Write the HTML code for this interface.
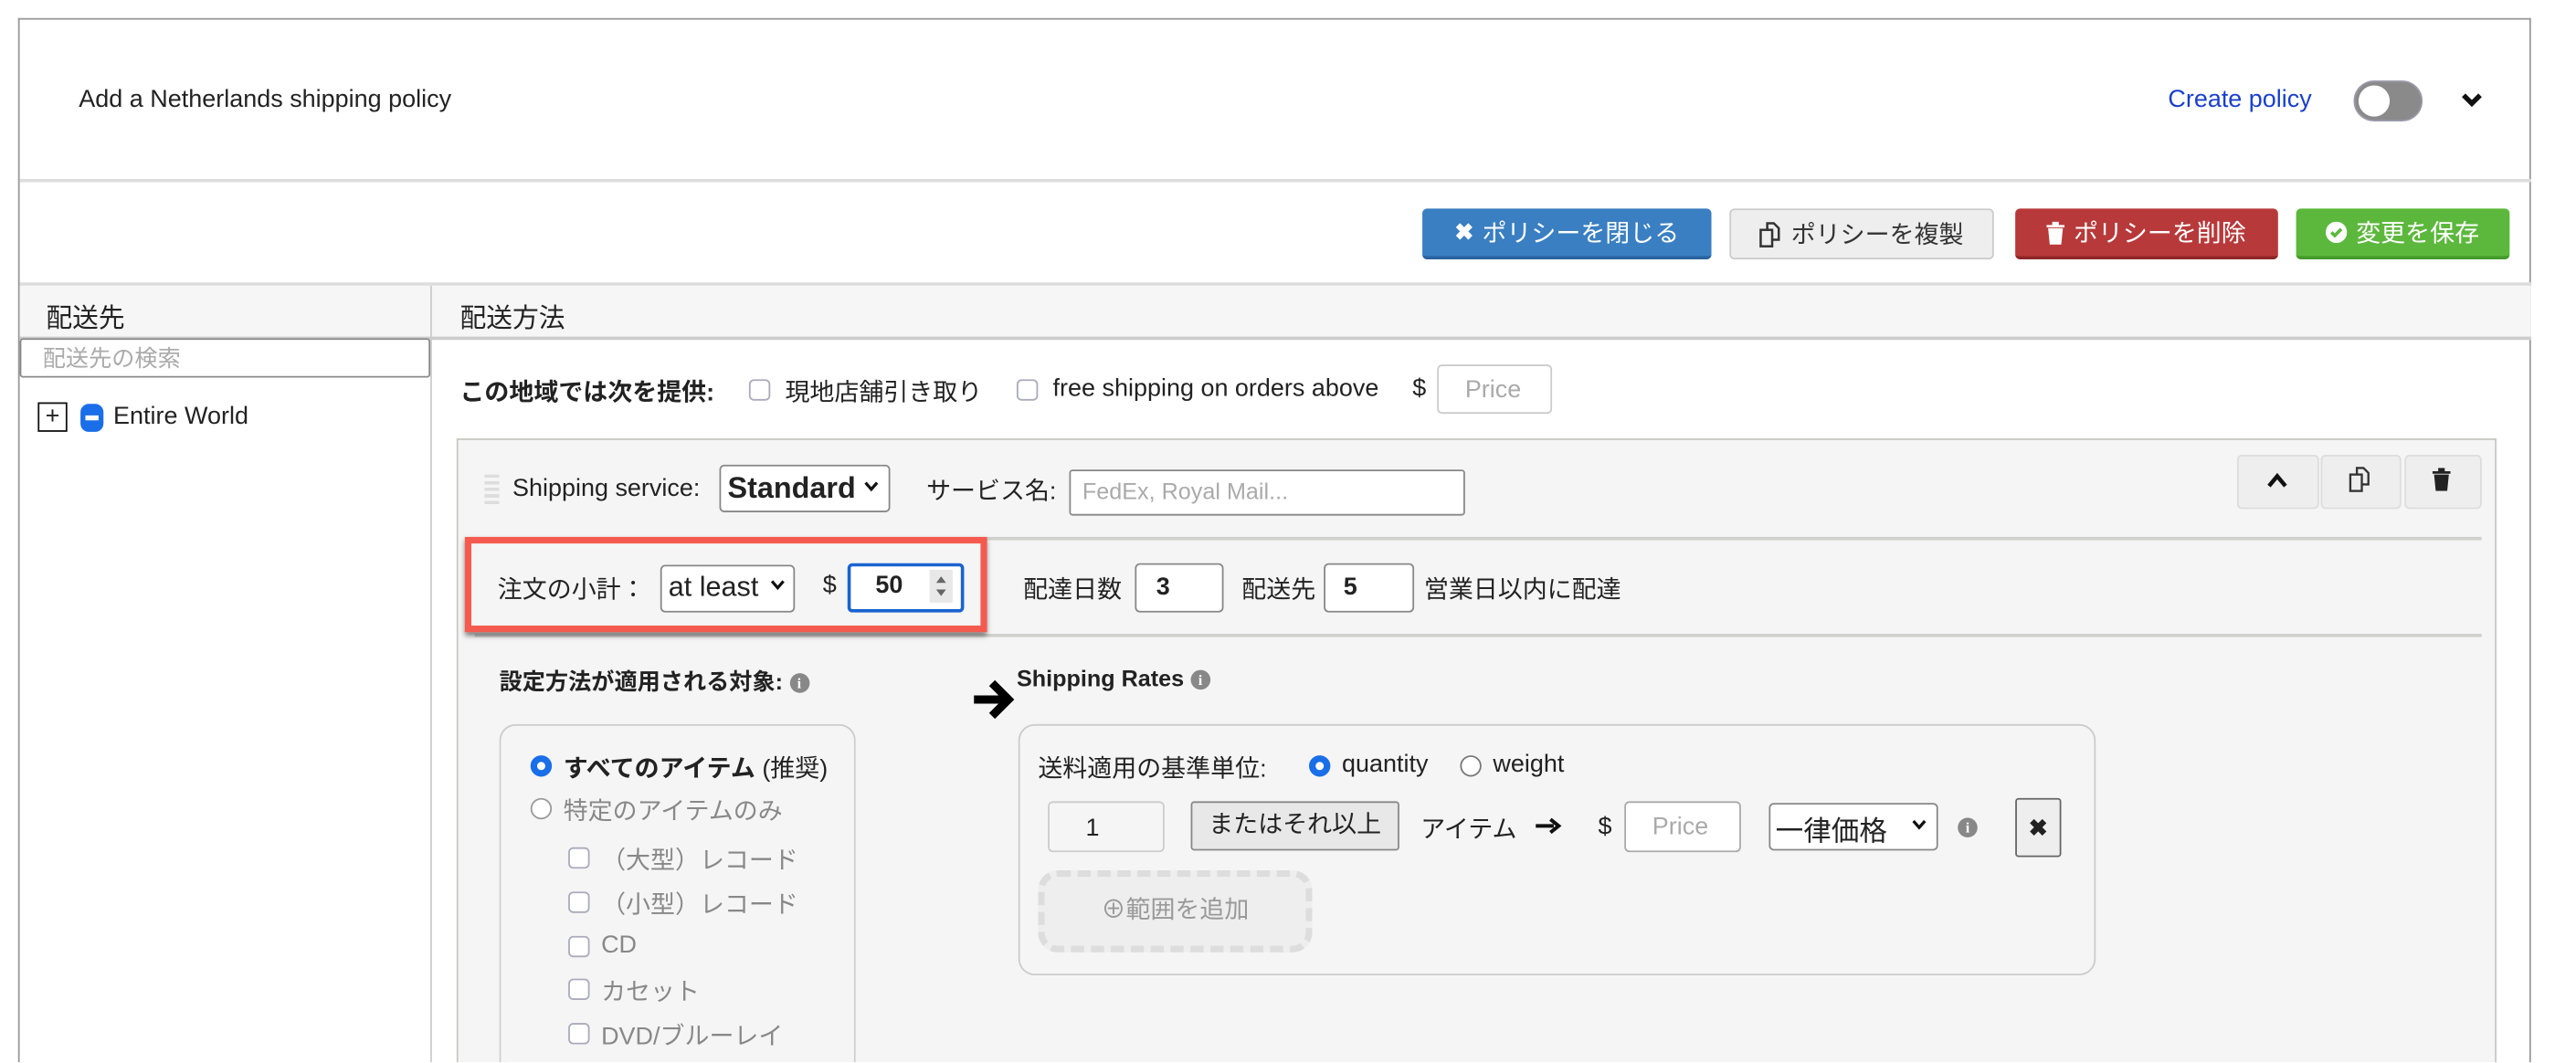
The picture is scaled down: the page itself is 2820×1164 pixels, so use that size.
<!DOCTYPE html>
<html><head><meta charset="utf-8"><style>
html,body{margin:0;padding:0;background:#fff;width:2820px;height:1164px;overflow:hidden}
#w{position:absolute;left:0;top:0;width:1568px;height:647px;overflow:hidden;transform:scale(1.798);transform-origin:0 0;font-family:"Liberation Sans","Noto Sans CJK JP",sans-serif;color:#222;font-size:15px}
.a{position:absolute;white-space:nowrap}
.box{position:absolute;box-sizing:border-box;background:#fff;border:1px solid #888;border-radius:3px}
.btn{position:absolute;box-sizing:border-box;border-radius:3px;color:#fff;font-size:15px;display:flex;align-items:center;justify-content:center;gap:5px}
.cb{position:absolute;width:13px;height:13px;box-sizing:border-box;border:1px solid #aab;border-radius:3px;background:#fff}
.rd{position:absolute;width:13px;height:13px;box-sizing:border-box;border:1px solid #777;border-radius:50%;background:#fff}
.rd.on{border:4px solid #1a6ee8}
.ph{color:#aaa}
.mut{color:#888}
.info{display:inline-block;width:12px;height:12px;border-radius:50%;background:#888;color:#fff;font-size:9px;font-weight:bold;text-align:center;line-height:12px;vertical-align:1px;font-family:"Liberation Serif",serif}
</style></head><body><div id="w">
<div class="a" style="left:11px;top:11px;width:1530px;height:636px;border:1px solid #999;box-sizing:border-box;border-bottom:none"></div>
<div class="a" style="left:48px;top:52px;font-size:15px">Add a Netherlands shipping policy</div>
<div class="a" style="left:1320px;top:52px;color:#1a3fcc;font-size:15px">Create policy</div>
<div class="a" style="left:1433px;top:49px;width:42px;height:25px;border-radius:13px;background:#8a8a8a;border:1px solid #99a;box-sizing:border-box"></div>
<div class="a" style="left:1436px;top:52px;width:19px;height:19px;border-radius:50%;background:#fff"></div>
<svg class="a" style="left:1498px;top:56px" width="14" height="10" viewBox="0 0 14 10"><path d="M2 2 L7 7 L12 2" stroke="#111" stroke-width="3" fill="none"/></svg>
<div class="a" style="left:12px;top:109px;width:1529px;height:2px;background:#ddd"></div>
<div class="btn" style="left:866px;top:127px;width:176px;height:31px;background:#3a7fc1;border-bottom:2px solid #2a62a0"><b style="font-size:14px">✖</b>ポリシーを閉じる</div>
<div class="btn" style="left:1053px;top:127px;width:161px;height:31px;background:#eee;color:#333;border:1px solid #ccc"><svg width="14" height="16" viewBox="0 0 14 16"><rect x="1" y="5" width="7" height="10" fill="none" stroke="#333" stroke-width="1.4"/><path d="M5 5V1h4l3 3v7H8" fill="none" stroke="#333" stroke-width="1.4"/></svg>ポリシーを複製</div>
<div class="btn" style="left:1227px;top:127px;width:160px;height:31px;background:#b8393a;border-bottom:2px solid #8e2627"><svg width="11" height="14" viewBox="0 0 11 14"><path d="M0 2h11v1.5H0zM3.5 0h4v2h-4zM1 4h9l-1 10H2z" fill="#fff"/></svg>ポリシーを削除</div>
<div class="btn" style="left:1398px;top:127px;width:130px;height:31px;background:#5cb83c;border-bottom:2px solid #449a2a"><svg width="13" height="13" viewBox="0 0 13 13"><circle cx="6.5" cy="6.5" r="6.5" fill="#fff"/><path d="M3.5 6.5l2 2 4-4" stroke="#5cb83c" stroke-width="2" fill="none"/></svg>変更を保存</div>
<div class="a" style="left:12px;top:172px;width:1529px;height:2px;background:#ddd"></div>
<div class="a" style="left:12px;top:174px;width:1529px;height:31px;background:#f6f6f6;border-bottom:2px solid #ccc"></div>
<div class="a" style="left:262px;top:174px;width:1px;height:473px;background:#ccc"></div>
<div class="a" style="left:28px;top:180px;font-size:16px">配送先</div>
<div class="a" style="left:280px;top:180px;font-size:16px">配送方法</div>
<div class="box" style="left:12px;top:206px;width:250px;height:24px;border-radius:2px"></div>
<div class="a ph" style="left:26px;top:208px;font-size:14px">配送先の検索</div>
<div class="a" style="left:23px;top:245px;width:18px;height:18px;border:1px solid #111;box-sizing:border-box;background:#fff;text-align:center;line-height:15px;font-size:15px">+</div>
<div class="a" style="left:49px;top:246px;width:14px;height:17px;border-radius:5px;background:#1a6ee8"></div>
<div class="a" style="left:52px;top:253px;width:8px;height:3px;background:#fff"></div>
<div class="a" style="left:69px;top:245px">Entire World</div>
<div class="a" style="left:280px;top:228px;font-weight:bold">この地域では次を提供:</div>
<div class="cb" style="left:456px;top:231px"></div>
<div class="a" style="left:478px;top:228px">現地店舗引き取り</div>
<div class="cb" style="left:619px;top:231px"></div>
<div class="a" style="left:641px;top:228px">free shipping on orders above</div>
<div class="a" style="left:860px;top:228px">$</div>
<div class="box" style="left:875px;top:222px;width:70px;height:30px;border-color:#ccc"></div>
<div class="a ph" style="left:892px;top:229px">Price</div>
<div class="a" style="left:278px;top:267px;width:1242px;height:380px;background:#f5f5f5;border:1px solid #c8c8c4;border-bottom:none;box-sizing:border-box"></div>
<div class="a" style="left:295px;top:289px;width:9px;height:19px;background:repeating-linear-gradient(#ddd 0 2px,transparent 2px 4px)"></div>
<div class="a" style="left:312px;top:289px">Shipping service:</div>
<div class="box" style="left:438px;top:283px;width:104px;height:29px"></div>
<div class="a" style="left:443px;top:287px;font-weight:bold;font-size:18px">Standard</div>
<svg class="a" style="left:526px;top:293px" width="9" height="7" viewBox="0 0 9 7"><path d="M1 1l3.5 4L8 1" stroke="#111" stroke-width="1.8" fill="none"/></svg>
<div class="a" style="left:564px;top:288px">サービス名:</div>
<div class="box" style="left:651px;top:286px;width:241px;height:28px;border-radius:2px"></div>
<div class="a ph" style="left:659px;top:291px;font-size:14px">FedEx, Royal Mail...</div>
<div class="a" style="left:1362px;top:277px;width:50px;height:33px;background:#eee;border:1px solid #ddd;box-sizing:border-box;border-radius:3px"></div>
<div class="a" style="left:1413px;top:277px;width:49px;height:33px;background:#eee;border:1px solid #ddd;box-sizing:border-box;border-radius:3px"></div>
<div class="a" style="left:1464px;top:277px;width:47px;height:33px;background:#eee;border:1px solid #ddd;box-sizing:border-box;border-radius:3px"></div>
<svg class="a" style="left:1380px;top:288px" width="13" height="10" viewBox="0 0 13 10"><path d="M1.5 8l5-6 5 6" stroke="#111" stroke-width="2.5" fill="none"/></svg>
<svg class="a" style="left:1430px;top:284px" width="14" height="16" viewBox="0 0 14 16"><rect x="1" y="5" width="7" height="10" fill="none" stroke="#333" stroke-width="1.3"/><path d="M5 5V1h4l3 3v7H8" fill="none" stroke="#333" stroke-width="1.3"/></svg>
<svg class="a" style="left:1481px;top:285px" width="11" height="14" viewBox="0 0 11 14"><path d="M0 2h11v1.5H0zM3.5 0h4v2h-4zM1 4h9l-1 10H2z" fill="#222"/></svg>
<div class="a" style="left:289px;top:327px;width:1222px;height:2px;background:#d0d0cc"></div>
<div class="a" style="left:289px;top:386px;width:1222px;height:2px;background:#d0d0cc"></div>
<div class="a" style="left:283px;top:327px;width:318px;height:58px;border:4px solid #f55a4e;box-sizing:border-box;background:#f5f5f5;box-shadow:0 2px 3px rgba(0,0,0,.5)"></div>
<div class="a" style="left:303px;top:348px">注文の小計：</div>
<div class="box" style="left:402px;top:344px;width:82px;height:29px"></div>
<div class="a" style="left:407px;top:348px;font-size:17px">at least</div>
<svg class="a" style="left:469px;top:353px" width="9" height="7" viewBox="0 0 9 7"><path d="M1 1l3.5 4L8 1" stroke="#111" stroke-width="1.8" fill="none"/></svg>
<div class="a" style="left:501px;top:348px">$</div>
<div class="box" style="left:516px;top:343px;width:71px;height:30px;border:2px solid #1a63d0;border-radius:3px"></div>
<div class="a" style="left:533px;top:348px;font-weight:bold">50</div>
<div class="a" style="left:566px;top:347px;width:14px;height:20px;background:#e8e8e8"></div>
<svg class="a" style="left:568px;top:349px" width="10" height="16" viewBox="0 0 10 16"><path d="M2 6l3-4 3 4zM2 10l3 4 3-4z" fill="#666"/></svg>
<div class="a" style="left:623px;top:348px">配達日数</div>
<div class="box" style="left:691px;top:343px;width:54px;height:30px"></div>
<div class="a" style="left:704px;top:349px;font-weight:bold">3</div>
<div class="a" style="left:756px;top:348px">配送先</div>
<div class="box" style="left:806px;top:343px;width:55px;height:30px"></div>
<div class="a" style="left:818px;top:349px;font-weight:bold">5</div>
<div class="a" style="left:867px;top:348px">営業日以内に配達</div>
<div class="a" style="left:304px;top:405px;font-weight:bold;font-size:14px">設定方法が適用される対象: <span class="info">i</span></div>
<div class="a" style="left:304px;top:441px;width:217px;height:206px;border:1px solid #ccc;border-bottom:none;border-radius:10px 10px 0 0;box-sizing:border-box"></div>
<div class="rd on" style="left:323px;top:460px"></div>
<div class="a" style="left:343px;top:457px;font-weight:bold">すべてのアイテム <span style="font-weight:normal">(推奨)</span></div>
<div class="rd" style="left:323px;top:486px;border-color:#999"></div>
<div class="a mut" style="left:343px;top:483px">特定のアイテムのみ</div>
<div class="cb" style="left:346px;top:516px"></div><div class="a mut" style="left:366px;top:513px">（大型）レコード</div>
<div class="cb" style="left:346px;top:543px"></div><div class="a mut" style="left:366px;top:540px">（小型）レコード</div>
<div class="cb" style="left:346px;top:570px"></div><div class="a mut" style="left:366px;top:567px">CD</div>
<div class="cb" style="left:346px;top:596px"></div><div class="a mut" style="left:366px;top:593px">カセット</div>
<div class="cb" style="left:346px;top:623px"></div><div class="a mut" style="left:366px;top:620px">DVD/ブルーレイ</div>
<svg class="a" style="left:591px;top:412px" width="28" height="28" viewBox="0 0 28 28"><path d="M2 14h20M13 4l10 10-10 10" stroke="#000" stroke-width="5" fill="none"/></svg>
<div class="a" style="left:619px;top:405px;font-weight:bold;font-size:14px">Shipping Rates <span class="info">i</span></div>
<div class="a" style="left:620px;top:441px;width:656px;height:153px;border:1px solid #ccc;border-radius:10px;box-sizing:border-box"></div>
<div class="a" style="left:632px;top:457px">送料適用の基準単位:</div>
<div class="rd on" style="left:797px;top:460px"></div>
<div class="a" style="left:817px;top:457px">quantity</div>
<div class="rd" style="left:889px;top:460px"></div>
<div class="a" style="left:909px;top:457px">weight</div>
<div class="box" style="left:638px;top:488px;width:71px;height:31px;border-color:#ccc;background:#f5f5f5"></div>
<div class="a" style="left:661px;top:496px">1</div>
<div class="a" style="left:725px;top:488px;width:127px;height:30px;background:#e8e8e8;border:1px solid #888;box-sizing:border-box;border-radius:2px;text-align:center;line-height:27px">またはそれ以上</div>
<div class="a" style="left:865px;top:494px">アイテム</div>
<svg class="a" style="left:935px;top:498px" width="16" height="10" viewBox="0 0 16 10"><path d="M0 5h11M9 1l5 4-5 4" stroke="#111" stroke-width="2.2" fill="none"/></svg>
<div class="a" style="left:973px;top:495px">$</div>
<div class="box" style="left:989px;top:488px;width:71px;height:31px;border-color:#aaa"></div>
<div class="a ph" style="left:1006px;top:495px">Price</div>
<div class="box" style="left:1077px;top:489px;width:103px;height:29px"></div>
<div class="a" style="left:1081px;top:492px;font-size:17px">一律価格</div>
<svg class="a" style="left:1164px;top:499px" width="9" height="7" viewBox="0 0 9 7"><path d="M1 1l3.5 4L8 1" stroke="#111" stroke-width="1.8" fill="none"/></svg>
<div class="a" style="left:1192px;top:495px"><span class="info">i</span></div>
<div class="a" style="left:1227px;top:486px;width:28px;height:36px;background:#eee;border:1px solid #666;box-sizing:border-box;border-radius:2px;text-align:center;line-height:34px;font-weight:bold;font-size:14px">✖</div>
<div class="a" style="left:632px;top:530px;width:167px;height:50px;border:4px dashed #ddd;border-radius:12px;box-sizing:border-box;background:#eee;text-align:center;line-height:42px;color:#999">⊕範囲を追加</div>
</div></body></html>
